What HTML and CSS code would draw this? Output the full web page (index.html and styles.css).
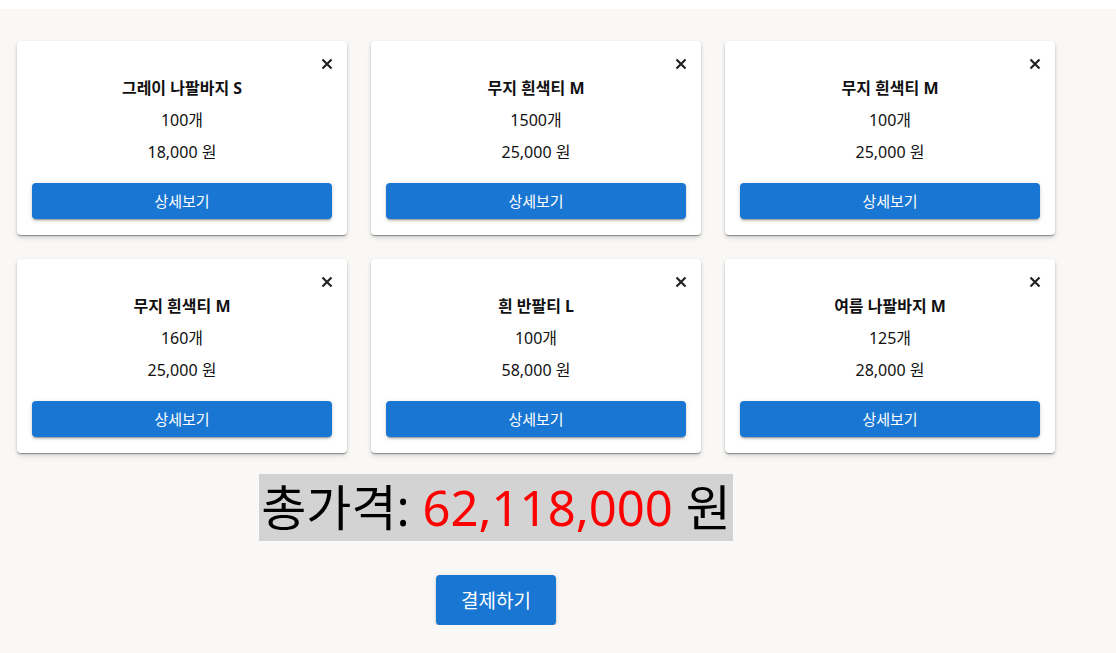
FILE: index.html
```html
<!DOCTYPE html>
<html lang="ko">
<head>
<meta charset="utf-8">
<link rel="stylesheet" href="styles.css">
</head>
<body>
<div class="topbar"></div>
<main class="page">
  <section class="grid">
    <div class="card">
      <div class="card-head"><button class="close" aria-label="삭제"><svg viewBox="0 0 12 12" width="12" height="12"><path d="M1.5 1.5 L10.5 10.5 M10.5 1.5 L1.5 10.5" stroke="#222" stroke-width="2.2"/></svg></button></div>
      <div class="title">그레이 나팔바지 S</div>
      <div class="line">100개</div>
      <div class="line">18,000 원</div>
      <button class="btn">상세보기</button>
    </div>
    <div class="card">
      <div class="card-head"><button class="close" aria-label="삭제"><svg viewBox="0 0 12 12" width="12" height="12"><path d="M1.5 1.5 L10.5 10.5 M10.5 1.5 L1.5 10.5" stroke="#222" stroke-width="2.2"/></svg></button></div>
      <div class="title">무지 흰색티 M</div>
      <div class="line">1500개</div>
      <div class="line">25,000 원</div>
      <button class="btn">상세보기</button>
    </div>
    <div class="card">
      <div class="card-head"><button class="close" aria-label="삭제"><svg viewBox="0 0 12 12" width="12" height="12"><path d="M1.5 1.5 L10.5 10.5 M10.5 1.5 L1.5 10.5" stroke="#222" stroke-width="2.2"/></svg></button></div>
      <div class="title">무지 흰색티 M</div>
      <div class="line">100개</div>
      <div class="line">25,000 원</div>
      <button class="btn">상세보기</button>
    </div>
    <div class="card">
      <div class="card-head"><button class="close" aria-label="삭제"><svg viewBox="0 0 12 12" width="12" height="12"><path d="M1.5 1.5 L10.5 10.5 M10.5 1.5 L1.5 10.5" stroke="#222" stroke-width="2.2"/></svg></button></div>
      <div class="title">무지 흰색티 M</div>
      <div class="line">160개</div>
      <div class="line">25,000 원</div>
      <button class="btn">상세보기</button>
    </div>
    <div class="card">
      <div class="card-head"><button class="close" aria-label="삭제"><svg viewBox="0 0 12 12" width="12" height="12"><path d="M1.5 1.5 L10.5 10.5 M10.5 1.5 L1.5 10.5" stroke="#222" stroke-width="2.2"/></svg></button></div>
      <div class="title">흰 반팔티 L</div>
      <div class="line">100개</div>
      <div class="line">58,000 원</div>
      <button class="btn">상세보기</button>
    </div>
    <div class="card">
      <div class="card-head"><button class="close" aria-label="삭제"><svg viewBox="0 0 12 12" width="12" height="12"><path d="M1.5 1.5 L10.5 10.5 M10.5 1.5 L1.5 10.5" stroke="#222" stroke-width="2.2"/></svg></button></div>
      <div class="title">여름 나팔바지 M</div>
      <div class="line">125개</div>
      <div class="line">28,000 원</div>
      <button class="btn">상세보기</button>
    </div>
  </section>
  <section class="summary">
    <div class="total">총가격: <span class="amount">62,118,000</span> 원</div>
    <button class="pay">결제하기</button>
  </section>
</main>
</body>
</html>
```

FILE: styles.css
```css
html {
  background: #f9f8f6;
}
body {
  margin: 0;
  font-family: "Noto Sans", "Noto Sans CJK KR", sans-serif;
  color: #1a1a1a;
}
.topbar {
  height: 9px;
  background: #ffffff;
}
.page {
  padding: 32px 0 0 17px;
}
.grid {
  display: grid;
  grid-template-columns: repeat(3, 330px);
  gap: 24px;
}
.card {
  background: #fff;
  border-radius: 4px;
  box-shadow: 0 2px 1px -1px rgba(0,0,0,0.2), 0 1px 1px 0 rgba(0,0,0,0.14), 0 1px 3px 0 rgba(0,0,0,0.12), 0 3px 5px rgba(0,0,0,0.12);
  padding: 17px 15px 16px;
  display: flex;
  flex-direction: column;
  align-items: stretch;
  text-align: center;
}
.card-head {
  display: flex;
  justify-content: flex-end;
  height: 12px;
  margin-right: -1px;
}
.close {
  border: 0;
  background: none;
  padding: 0;
  width: 12px;
  height: 12px;
  display: block;
  cursor: pointer;
}
.close svg {
  display: block;
}
.title {
  margin-top: 7px;
  font-weight: 700;
  font-size: 16px;
  line-height: 22px;
  color: #111;
}
.line {
  margin-top: 10px;
  font-size: 16px;
  line-height: 22px;
  color: #111;
}
.btn {
  margin-top: 20px;
  height: 36px;
  border: 0;
  border-radius: 4px;
  background: #1976d2;
  color: #fff;
  font-family: inherit;
  font-size: 15px;
  line-height: 34px;
  box-shadow: 0 3px 1px -2px rgba(0,0,0,0.2), 0 2px 2px 0 rgba(0,0,0,0.14), 0 1px 5px 0 rgba(0,0,0,0.12);
}
.summary {
  width: 958px;
  margin-top: 21px;
  display: flex;
  flex-direction: column;
  align-items: center;
}
.total {
  background: #d3d3d3;
  font-size: 49px;
  line-height: 67px;
  color: #000;
  padding: 0 2px;
}
.amount {
  color: #ff0000;
}
.pay {
  margin-top: 34px;
  width: 120px;
  height: 50px;
  border: 0;
  border-radius: 4px;
  background: #1976d2;
  color: #fff;
  font-family: inherit;
  font-size: 19px;
  box-shadow: 0 3px 1px -2px rgba(0,0,0,0.2), 0 2px 2px 0 rgba(0,0,0,0.14), 0 1px 5px 0 rgba(0,0,0,0.12);
}
```
